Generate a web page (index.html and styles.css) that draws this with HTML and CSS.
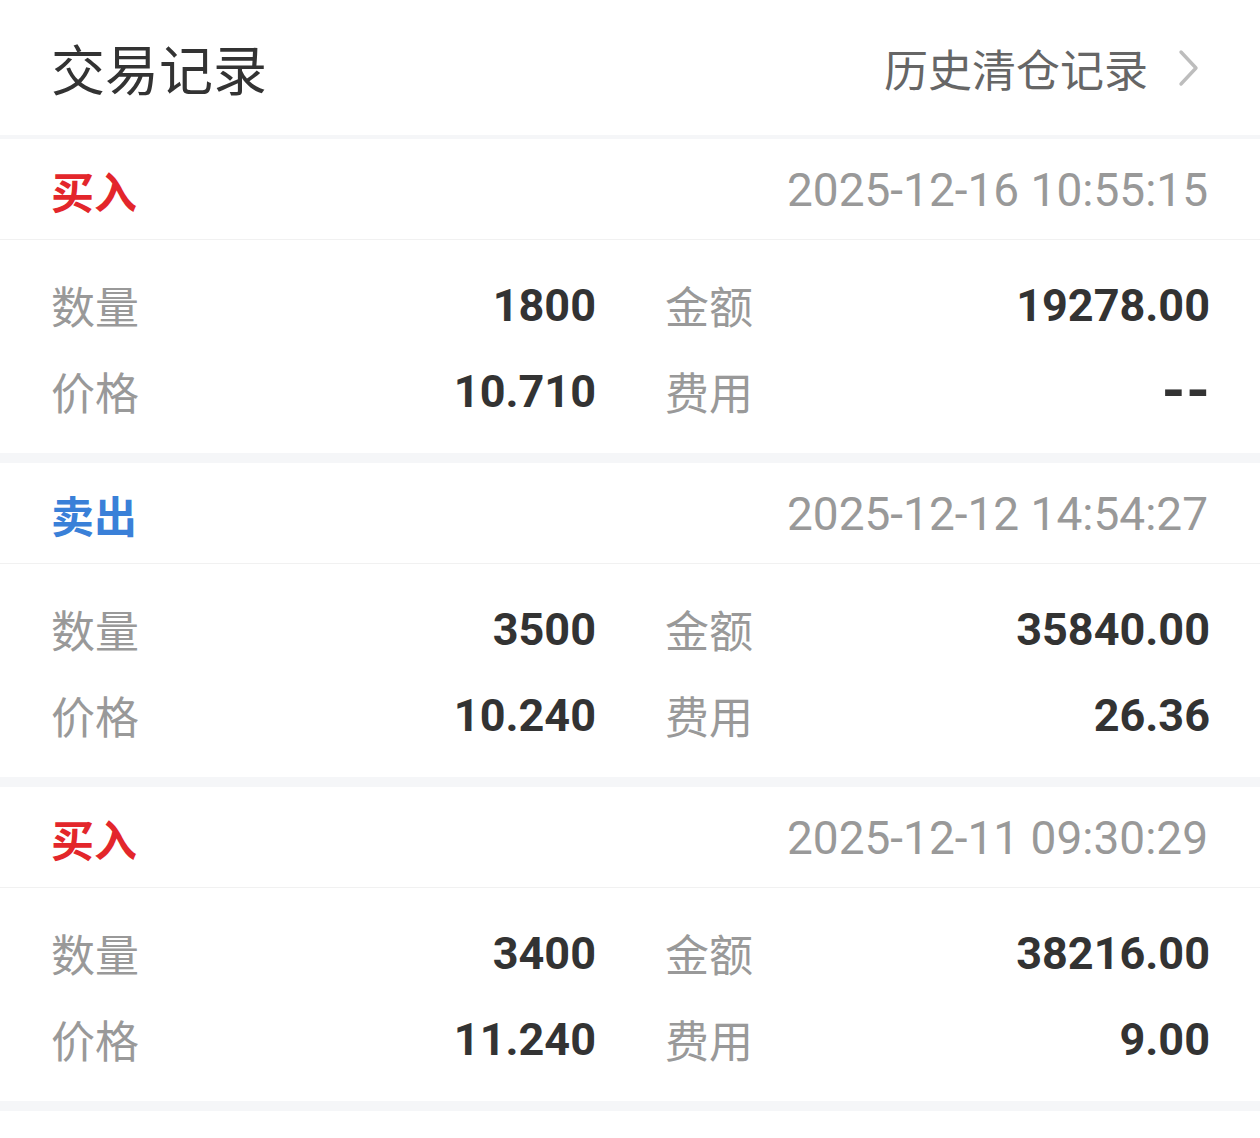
FILE: index.html
```html
<!DOCTYPE html>
<html lang="zh-CN">
<head>
<meta charset="utf-8">
<title>交易记录</title>
<link rel="stylesheet" href="styles.css">
</head>
<body>
<div class="page">
  <header class="top">
    <h1 class="title">交易记录</h1>
    <a class="history">历史清仓记录<svg class="chev" width="24" height="38" viewBox="0 0 24 38"><path d="M5 3 L20 19 L5 35" fill="none" stroke="#bdbdbd" stroke-width="3.4" stroke-linecap="round" stroke-linejoin="round"/></svg></a>
  </header>
  <div class="band thin"></div>

  <section class="card">
    <div class="card-head"><span class="type buy">买入</span><span class="time">2025-12-16 10:55:15</span></div>
    <div class="card-body">
      <div class="cell"><span class="label">数量</span><span class="value">1800</span></div>
      <div class="cell"><span class="label">金额</span><span class="value">19278.00</span></div>
      <div class="cell"><span class="label">价格</span><span class="value">10.710</span></div>
      <div class="cell"><span class="label">费用</span><span class="value dash">--</span></div>
    </div>
  </section>
  <div class="band"></div>

  <section class="card">
    <div class="card-head"><span class="type sell">卖出</span><span class="time">2025-12-12 14:54:27</span></div>
    <div class="card-body">
      <div class="cell"><span class="label">数量</span><span class="value">3500</span></div>
      <div class="cell"><span class="label">金额</span><span class="value">35840.00</span></div>
      <div class="cell"><span class="label">价格</span><span class="value">10.240</span></div>
      <div class="cell"><span class="label">费用</span><span class="value">26.36</span></div>
    </div>
  </section>
  <div class="band"></div>

  <section class="card">
    <div class="card-head"><span class="type buy">买入</span><span class="time">2025-12-11 09:30:29</span></div>
    <div class="card-body">
      <div class="cell"><span class="label">数量</span><span class="value">3400</span></div>
      <div class="cell"><span class="label">金额</span><span class="value">38216.00</span></div>
      <div class="cell"><span class="label">价格</span><span class="value">11.240</span></div>
      <div class="cell"><span class="label">费用</span><span class="value">9.00</span></div>
    </div>
  </section>
  <div class="band"></div>
</div>
</body>
</html>
```

FILE: styles.css
```css
html, body {
  margin: 0;
  padding: 0;
  background: #ffffff;
}

body {
  font-family: "Roboto", "Noto Sans CJK SC", sans-serif;
  color: #333333;
}

.page {
  width: 1260px;
}

.top {
  height: 135px;
  display: flex;
  align-items: center;
  justify-content: space-between;
  padding: 0 60px 0 51px;
  box-sizing: border-box;
}

.title {
  margin: 0;
  font-family: "Noto Sans CJK SC", sans-serif;
  font-size: 54px;
  font-weight: 400;
  color: #333333;
  line-height: 1;
}

.history {
  display: flex;
  align-items: center;
  font-family: "Noto Sans CJK SC", sans-serif;
  font-size: 44px;
  color: #666666;
  text-decoration: none;
  line-height: 1;
}

.chev {
  margin-left: 28px;
  display: block;
}

.band {
  height: 10px;
  background: #f5f6f8;
}

.band.thin {
  height: 4px;
}

.card {
  background: #ffffff;
}

.card-head {
  height: 98px;
  border-bottom: 1px solid #f1f1f1;
  display: flex;
  align-items: center;
  justify-content: space-between;
  padding: 2px 52px 0 51px;
}

.type {
  font-family: "Noto Sans CJK SC", sans-serif;
  font-size: 43px;
  font-weight: 700;
  line-height: 1;
}

.type.buy {
  color: #e3262b;
}

.type.sell {
  color: #3a80d8;
}

.time {
  font-size: 46px;
  color: #999999;
  line-height: 1;
}

.card-body {
  display: grid;
  grid-template-columns: 545px 545px;
  column-gap: 69px;
  padding: 22px 50px 19px 51px;
}

.cell {
  height: 86px;
  display: flex;
  align-items: center;
  justify-content: space-between;
}

.label {
  font-family: "Noto Sans CJK SC", sans-serif;
  font-size: 44px;
  color: #999999;
  line-height: 1;
}

.value {
  font-size: 45px;
  font-weight: 700;
  color: #333333;
  line-height: 1;
}

.value.dash {
  font-size: 60px;
  letter-spacing: 1px;
  margin-right: -1px;
}
```
